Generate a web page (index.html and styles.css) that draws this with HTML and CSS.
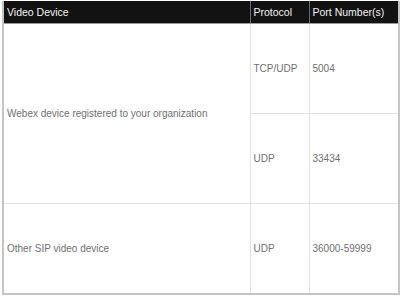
FILE: index.html
```html
<!DOCTYPE html>
<html lang="en">
<head>
    <meta charset="UTF-8">
    <meta name="viewport" content="width=device-width, initial-scale=1.0">
    <title>Video Device Ports</title>
    <link rel="stylesheet" href="styles.css">
</head>
<body>
    <table class="ports-table">
        <colgroup>
            <col class="col-device">
            <col class="col-protocol">
            <col class="col-port">
        </colgroup>
        <thead>
            <tr>
                <th>Video Device</th>
                <th>Protocol</th>
                <th>Port Number(s)</th>
            </tr>
        </thead>
        <tbody>
            <tr class="row-a">
                <td rowspan="2">Webex device registered to your organization</td>
                <td>TCP/UDP</td>
                <td>5004</td>
            </tr>
            <tr class="row-b">
                <td>UDP</td>
                <td>33434</td>
            </tr>
            <tr class="row-c">
                <td>Other SIP video device</td>
                <td>UDP</td>
                <td>36000-59999</td>
            </tr>
        </tbody>
    </table>
</body>
</html>
```

FILE: styles.css
```css
body {
    margin: 0;
    padding: 1px 2px 0 2px;
    background-color: #fff;
    font-family: 'Liberation Sans', Arial, sans-serif;
}
.ports-table {
    width: 396px;
    border-collapse: collapse;
    table-layout: fixed;
    border: 2px solid #c4c4c4;
    border-top: none;
}
.col-device {
    width: 247px;
}
.col-protocol {
    width: 59px;
}
.col-port {
    width: 90px;
}
th {
    background-color: #121212;
    color: #f2f2f2;
    font-weight: normal;
    font-size: 10.5px;
    text-align: left;
    height: 22px;
    padding: 0 3px;
    border-left: 1px solid #6a6a6a;
    border-bottom: 1px solid #9a9a9a;
}
th:first-child {
    border-left: none;
}
td {
    color: #707070;
    font-size: 10px;
    padding: 0 3px;
    border: 1px solid #e2e2e2;
}
.row-a td,
.row-b td,
.row-c td {
    height: 89px;
}
```
